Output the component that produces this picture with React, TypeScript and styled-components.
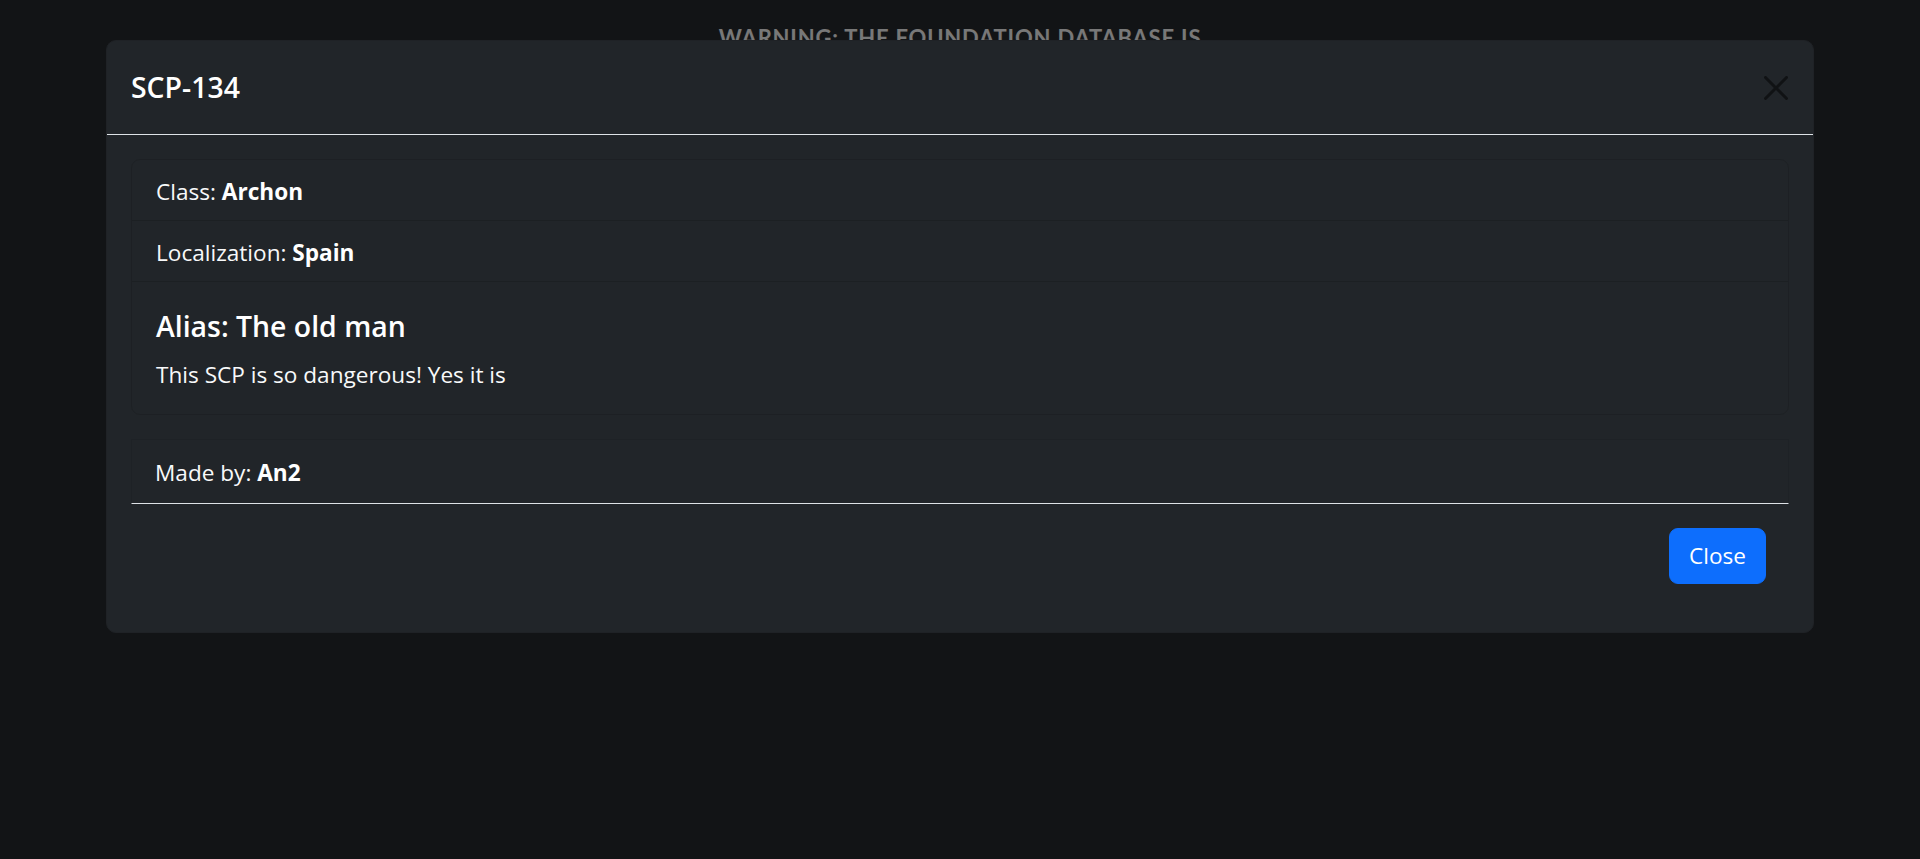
import { createGlobalStyle, styled } from "styled-components";

const GlobalStyle = createGlobalStyle`
  html, body {
    margin: 0;
    padding: 0;
    background: #25282c;
    font-family: "Open Sans", "Noto Sans", sans-serif;
    color: #f8f9fa;
  }
  * {
    box-sizing: border-box;
  }
`;

const Page = styled.div`
  min-height: 100vh;
  padding-top: 23px;
  text-align: center;
`;

const Warning = styled.h1`
  margin: 0;
  font-family: "Lato", "Open Sans", sans-serif;
  font-size: 22px;
  font-weight: 700;
  line-height: 30px;
  letter-spacing: 0.8px;
  color: #f0f0f0;
`;

const Backdrop = styled.div`
  position: fixed;
  inset: 0;
  background: rgba(0, 0, 0, 0.5);
`;

const ModalLayer = styled.div`
  position: fixed;
  inset: 0;
  overflow-y: auto;
  padding-top: 40px;
`;

const Dialog = styled.div`
  width: 1708px;
  margin: 0 auto;
  background: #212529;
  border: 1px solid #1f2226;
  border-radius: 10px;
`;

const Header = styled.div`
  display: flex;
  align-items: center;
  padding: 24px;
  border-bottom: 1px solid #dee2e6;
`;

const Title = styled.h5`
  margin: 0;
  font-size: 28.4px;
  font-weight: 600;
  line-height: 45px;
  color: #fff;
`;

const CloseX = styled.button`
  margin-left: auto;
  margin-right: 1px;
  width: 24px;
  height: 24px;
  padding: 0;
  border: 0;
  background: transparent;
  cursor: pointer;
  display: flex;
  opacity: 0.5;
`;

const Body = styled.div`
  padding: 24px;
`;

const List = styled.div`
  border: 1px solid rgba(0, 0, 0, 0.11);
  border-radius: 9px;
`;

const Item = styled.div<{ $first?: boolean; $roomy?: boolean }>`
  padding: ${(p) => (p.$roomy ? "26px 24px 21px" : "14px 24px 10px")};
  border-top: ${(p) => (p.$first ? "0" : "1px solid rgba(0, 0, 0, 0.13)")};
  font-size: 22.6px;
  line-height: 36px;
  color: #f8f9fa;

  b {
    font-weight: 700;
    color: #fff;
  }
`;

const AliasTitle = styled.h5`
  margin: 0 0 13px;
  font-size: 28.4px;
  font-weight: 600;
  line-height: 36px;
  color: #fff;
`;

const AliasText = styled.p`
  margin: 0;
  font-size: 22.6px;
  line-height: 36px;
`;

const Credit = styled.div`
  margin-top: 24px;
  padding: 15px 23px 12px;
  border: 1px solid rgba(0, 0, 0, 0.06);
  border-bottom: 1px solid #dee2e6;
  font-size: 22.6px;
  line-height: 36px;
  color: #f8f9fa;

  b {
    font-weight: 700;
    color: #fff;
  }
`;

const Footer = styled.div`
  display: flex;
  justify-content: flex-end;
  padding: 0 47px 48px 24px;
`;

const Button = styled.button`
  font-family: inherit;
  font-size: 22.6px;
  line-height: 36px;
  padding: 9px 18px;
  color: #fff;
  background: #0d6efd;
  border: 1px solid #0d6efd;
  border-radius: 9px;
  cursor: pointer;
  width: 97px;
`;

export default function App() {
  return (
    <>
      <GlobalStyle />
      <Page>
        <Warning>WARNING: THE FOUNDATION DATABASE IS</Warning>
      </Page>
      <Backdrop />
      <ModalLayer>
        <Dialog>
          <Header>
            <Title>SCP-134</Title>
            <CloseX aria-label="Close">
              <svg viewBox="0 0 16 16" width="24" height="24">
                <path
                  fill="#000"
                  d="M.293.293a1 1 0 0 1 1.414 0L8 6.586 14.293.293a1 1 0 1 1 1.414 1.414L9.414 8l6.293 6.293a1 1 0 0 1-1.414 1.414L8 9.414l-6.293 6.293a1 1 0 0 1-1.414-1.414L6.586 8 .293 1.707a1 1 0 0 1 0-1.414z"
                />
              </svg>
            </CloseX>
          </Header>
          <Body>
            <List>
              <Item $first>
                Class: <b>Archon</b>
              </Item>
              <Item>
                Localization: <b>Spain</b>
              </Item>
              <Item $roomy>
                <AliasTitle>Alias: The old man</AliasTitle>
                <AliasText>This SCP is so dangerous! Yes it is</AliasText>
              </Item>
            </List>
            <Credit>
              Made by: <b>An2</b>
            </Credit>
          </Body>
          <Footer>
            <Button>Close</Button>
          </Footer>
        </Dialog>
      </ModalLayer>
    </>
  );
}
